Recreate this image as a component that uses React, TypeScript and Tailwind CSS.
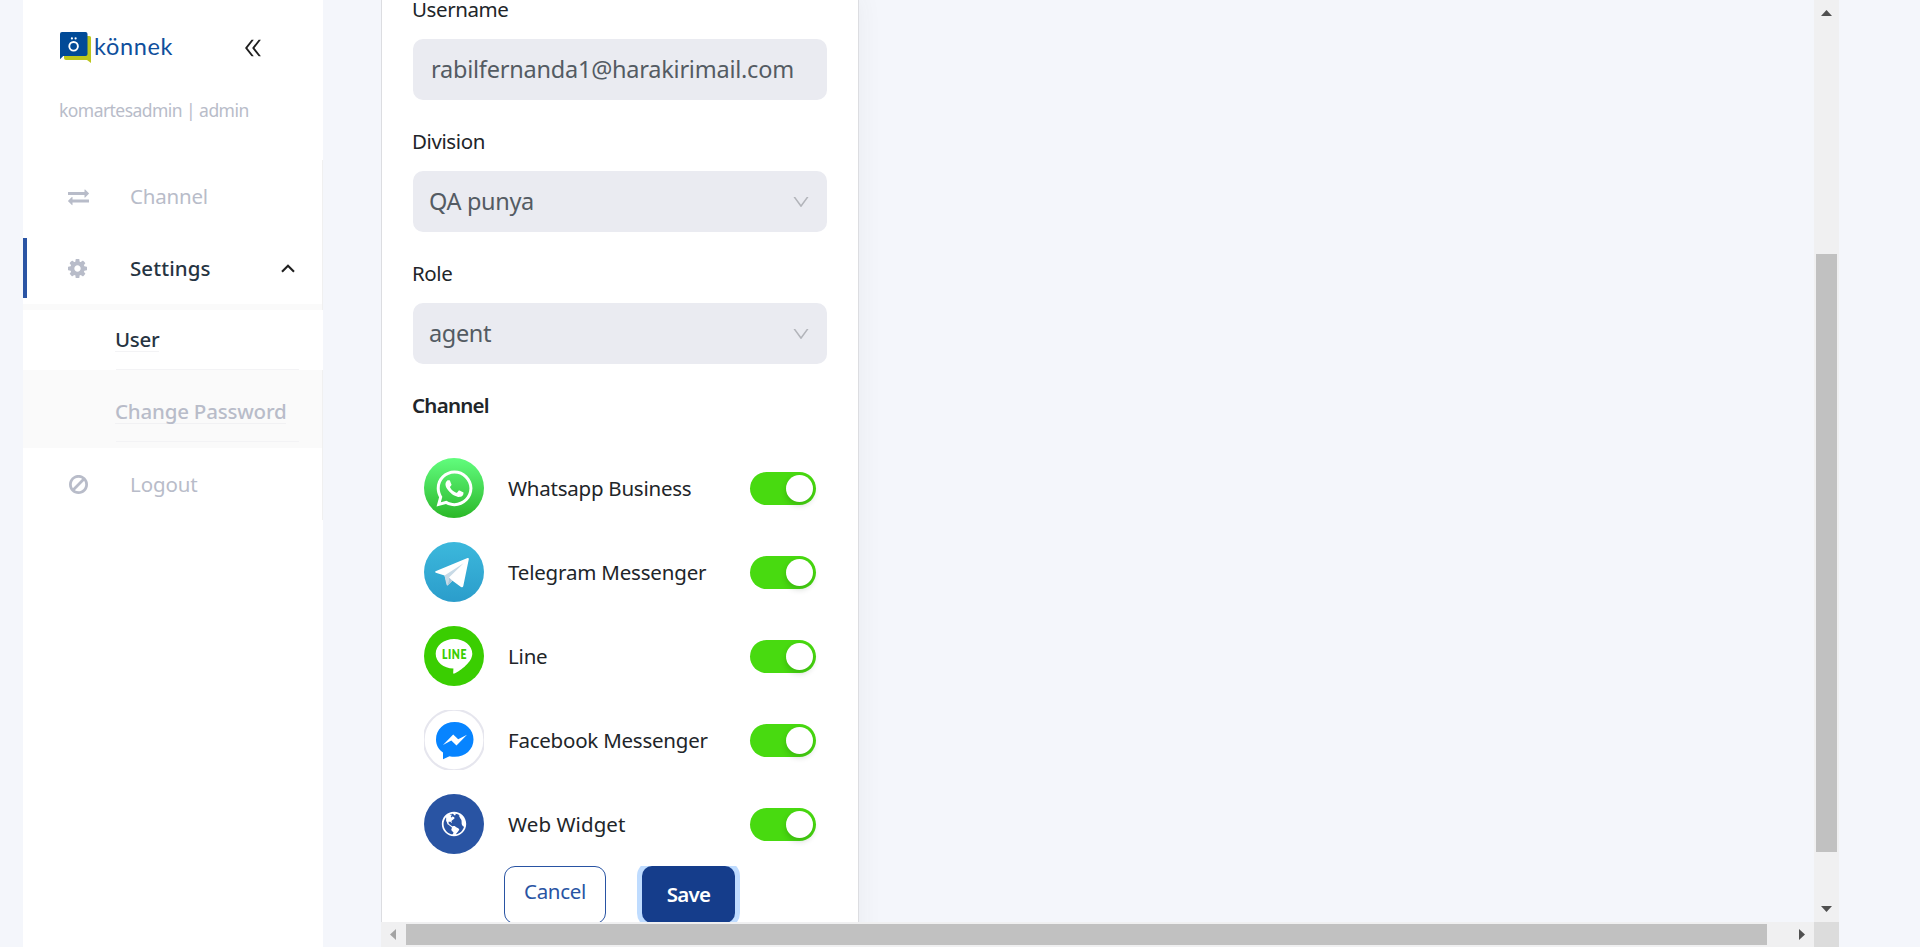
import React from "react";
import { AiOutlineDoubleLeft, AiOutlineDown } from "react-icons/ai";
import { FaWhatsapp } from "react-icons/fa";
import { IoMdGlobe } from "react-icons/io";

function Logo() {
  return (
    <div className="flex h-[32px] w-[114px] items-start">
      <svg width="32" height="32" viewBox="0 0 32 32" className="shrink-0">
        <path d="M5 4h24.500q1.500 0 1.500 1.500V31l-4-3H6q-2 0-2-2V5q0-1 1-1z" fill="#bcc61c" />
        <path d="M2 0h23.500q2 0 2 2v20q0 2-2 2H3.200L0 27.200V2q0-2 2-2z" fill="#014a97" />
        <circle cx="13.600" cy="14.300" r="4.300" fill="none" stroke="#fff" strokeWidth="1.900" />
        <circle cx="11.900" cy="6.400" r="1.100" fill="#fff" />
        <circle cx="15.600" cy="6.400" r="1.100" fill="#fff" />
      </svg>
      <span className="ml-[2px] font-['Lato'] text-[23.500px] leading-[29px] tracking-[0.650px] text-[#0f4f9d]">könnek</span>
    </div>
  );
}

function ExchangeIcon() {
  return (
    <svg width="21" height="21" viewBox="0 0 1792 1792" fill="currentColor">
      <path d="M1792 1184v192q0 13-9.500 22.500t-22.500 9.500h-1376v192q0 13-9.500 22.500t-22.500 9.500q-12 0-24-10l-319-320q-9-9-9-22 0-14 9-23l320-320q9-9 23-9 13 0 22.500 9.500t9.500 22.500v192h1376q13 0 22.500 9.500t9.500 22.500zm0-544q0 14-9 23l-320 320q-9 9-23 9-13 0-22.500-9.500t-9.500-22.500v-192h-1376q-13 0-22.500-9.500t-9.500-22.500v-192q0-13 9.500-22.500t22.500-9.500h1376v-192q0-14 9-23t23-9q12 0 24 10l319 319q9 9 9 23z" />
    </svg>
  );
}

function CogIcon() {
  return (
    <svg width="19" height="19" viewBox="0 128 1536 1536" fill="currentColor">
      <path d="M1024 896q0-106-75-181t-181-75-181 75-75 181 75 181 181 75 181-75 75-181zm512-109v222q0 12-8 23t-20 13l-185 28q-19 54-39 91 35 50 107 138 10 12 10 25t-9 23q-27 37-99 108t-94 71q-12 0-26-9l-138-108q-44 23-91 38-16 136-29 186-7 28-36 28h-222q-14 0-24.500-8.500t-11.500-21.500l-28-184q-49-16-90-37l-141 107q-10 9-25 9-14 0-25-11-126-114-165-168-7-10-7-23 0-12 8-23 15-21 51-66.500t54-70.500q-27-50-41-99l-183-27q-13-2-21-12.500t-8-23.500v-222q0-12 8-23t19-13l186-28q14-46 39-92-40-57-107-138-10-12-10-24 0-10 9-23 26-36 98.500-107.500t94.500-71.500q13 0 26 10l138 107q44-23 91-38 16-136 29-186 7-28 36-28h222q14 0 24.500 8.500t11.500 21.500l28 184q49 16 90 37l142-107q9-9 24-9 13 0 25 10 129 119 165 170 7 8 7 22 0 12-8 23-15 21-51 66.500t-54 70.500q26 50 41 98l183 28q13 2 21 12.500t8 23.500z" />
    </svg>
  );
}

function BanIcon() {
  return (
    <svg width="19" height="19" viewBox="0 0 1536 1536" fill="currentColor">
      <path d="M1312 765q0-161-87-295l-754 753q137 89 297 89 111 0 211.500-43.500t173.500-116.500 116-174.500 43-212.500zm-999 299l755-754q-135-91-300-91-148 0-273 73t-198 199-73 274q0 162 89 299zm1223-299q0 157-61 300t-163.500 246-245 164-298.500 61-298.500-61-245-164-163.500-246-61-300 61-299.500 163.500-245.500 245-164 298.500-61 298.500 61 245 164 163.500 245.500 61 299.500z" />
    </svg>
  );
}

function Sidebar() {
  return (
    <aside className="flex w-[300px] shrink-0 flex-col bg-white text-[20.500px] text-[#b8bcc9]">
      <div className="flex h-[98px] items-start pl-[37px] pt-[32px]">
        <Logo />
        <AiOutlineDoubleLeft className="ml-[67px] mt-[4px] h-6 w-6 text-[#1f1f1f]" />
      </div>
      <div className="h-[62px] pl-[36px] text-[17.500px] leading-[24px] tracking-[-0.550px]">komartesadmin | admin</div>

      <div className="flex h-[72px] items-center border-r border-[#f0f0f0] pl-[45px]">
        <ExchangeIcon />
        <span className="ml-[41px] tracking-[-0.200px]">Channel</span>
      </div>
      <div className="flex h-[72px] items-center border-r border-[#f0f0f0]">
        <span className="h-[60px] w-1 bg-[#2a54a4]" />
        <span className="ml-[41px]"><CogIcon /></span>
        <span className="ml-[43px] w-[151px] font-medium tracking-[0.100px] text-[#263442]">Settings</span>
        <svg width="14" height="9" viewBox="0 0 14 9" fill="none" stroke="#1f1f1f" strokeWidth="2.100">
          <path d="M1 7.800L7 1.800L13 7.800" />
        </svg>
      </div>
      <div className="flex h-[144px] flex-col bg-[#fafafa] font-medium">
        <div className="h-[6px] shrink-0 border-r border-[#f0f0f0]" />
        <div className="h-[60px] shrink-0 bg-white pl-[93px] pr-6">
          <div className="flex h-[60px] items-center border-b border-[#f3f3f5]">
            <span className="ml-[-1px] border-b border-[#f3f3f5] leading-[23px] tracking-[-0.300px] text-[#263442]">User</span>
          </div>
        </div>
        <div className="h-[78px] border-r border-[#f0f0f0] pl-[93px] pr-[23px] pt-3">
          <div className="flex h-[60px] items-center border-b border-[#f3f3f5]">
            <span className="ml-[-1px] whitespace-nowrap border-b border-[#f1f1f3] leading-[23px] tracking-[-0.200px]">Change Password</span>
          </div>
        </div>
      </div>
      <div className="flex h-[72px] items-center border-r border-[#f0f0f0] pl-[46px]">
        <BanIcon />
        <span className="ml-[42px] tracking-[-0.100px]">Logout</span>
      </div>
    </aside>
  );
}

function Field({ label, value, select }: { label: string; value: string; select?: boolean }) {
  return (
    <div className="mb-[27px]">
      <div className="mb-4 ml-[-1px] h-[28px] text-[20.500px] leading-[28px] tracking-[-0.400px]">{label}</div>
      {select ? (
        <div className="flex h-[61px] items-center justify-between rounded-[10px] bg-[#eaebf1] pl-4 pr-4 pt-px text-[23.500px] tracking-[-0.350px] text-[#545b63]">
          <span>{value}</span>
          <AiOutlineDown className="h-5 w-5 text-[#b2b4ba]" />
        </div>
      ) : (
        <div className="flex h-[61px] items-center rounded-[10px] bg-[#eaebf1] pl-[18px] text-[23.500px] tracking-[-0.230px] text-[#545b63]">
          {value}
        </div>
      )}
    </div>
  );
}

function TelegramIcon() {
  return (
    <svg width="60" height="60" viewBox="0 0 60 60">
      <path d="M11.500 29.300L43.500 16Q45 15.600 44.800 17.300L39.300 44Q38.800 46 37 45L28.500 38.700L23.500 43.500L20.500 33.600L11.800 30.800Q10.500 30 11.500 29.300z" fill="#fff" />
      <path d="M20.500 33.500L39.600 21.300L25 35.500L23.600 43.600Q22.700 43.500 22.300 42z" fill="#c8dae6" />
      <path d="M25 35.500L28.500 38.700L23.600 43.700z" fill="#a9c7da" />
    </svg>
  );
}

function LineIcon() {
  return (
    <svg width="60" height="60" viewBox="0 0 60 60">
      <path d="M30 13C40.200 13 48.300 19.500 48.300 27.700C48.300 36 36.500 44.500 31 47.300C29.500 48 29 47.700 29.200 46.200L29.400 42.500C19.500 42.300 11.700 35.900 11.700 27.700C11.700 19.500 19.900 13 30 13z" fill="#fff" />
      <text x="18" y="32.600" textLength="25" lengthAdjust="spacingAndGlyphs" fontFamily="Lato" fontSize="12.500" fontWeight="800" letterSpacing="0.700" fill="#3ace01">LINE</text>
    </svg>
  );
}

function MessengerIcon() {
  return (
    <svg width="60" height="60" viewBox="0 0 60 60">
      <circle cx="30" cy="30" r="30.300" fill="#fff" stroke="#e6e6ee" strokeWidth="2" />
      <path d="M30.700 12C41.300 12 49.500 19.300 49.500 29.500C49.500 39.500 41.300 46.800 30.700 46.800C29 46.800 27 46.600 25.500 46.200L19 49.200V42.500C14.500 39.500 12 35 12 29.500C12 19.300 20 12 30.700 12z" fill="#0784ff" />
      <path d="M19 35L29.200 24.400L34.200 29.300L43 24.800L32.500 35.400L27.300 30.500z" fill="#fff" />
    </svg>
  );
}

const channels: { name: string; tile: string; text: string; icon: React.ReactNode }[] = [
  { name: "Whatsapp Business", tile: "rounded-full bg-linear-to-b from-[#61fd7d] to-[#2bb826]", text: "tracking-[-0.240px]", icon: <FaWhatsapp className="h-[41px] w-[41px] text-white" /> },
  { name: "Telegram Messenger", tile: "rounded-full bg-linear-to-b from-[#3cb8dc] to-[#2b9dcb]", text: "tracking-[-0.190px]", icon: <TelegramIcon /> },
  { name: "Line", tile: "rounded-full bg-[#3ace01]", text: "tracking-[-0.200px]", icon: <LineIcon /> },
  { name: "Facebook Messenger", tile: "bg-white", text: "tracking-[-0.230px]", icon: <MessengerIcon /> },
  { name: "Web Widget", tile: "rounded-full bg-[#2954a3]", text: "tracking-[0.080px]", icon: <IoMdGlobe className="mr-px h-[30px] w-[30px] text-white" /> },
];

function UserForm() {
  return (
    <div className="mt-[-5px] h-[1000px] w-[478px] shrink-0 border-x border-[#dcdde1] bg-white pl-[31px] text-[20.500px] text-[#212529] shadow-[0_0_24px_rgba(60,60,70,0.060)]">
      <div className="w-[414px]">
        <Field label="Username" value="rabilfernanda1@harakirimail.com" />
        <Field label="Division" value="QA punya" select />
        <Field label="Role" value="agent" select />
        <div className="mb-[39px] ml-[-1px] h-[28px] font-semibold leading-[28px] tracking-[-0.750px]">Channel</div>
        <div className="flex flex-col gap-6 pl-[11px] pr-[11px]">
          {channels.map((c) => (
            <div key={c.name} className="flex h-[60px] items-center">
              <span className={`flex h-[60px] w-[60px] items-center justify-center overflow-hidden ${c.tile}`}>{c.icon}</span>
              <span className={`ml-6 grow whitespace-nowrap ${c.text}`}>{c.name}</span>
              <span className="mt-px flex h-[33px] w-[66px] items-center justify-end rounded-full bg-[#48da10] pr-[3px]">
                <span className="h-[27px] w-[27px] rounded-full bg-white shadow-[0_3px_6px_rgba(0,35,11,0.200)]" />
              </span>
            </div>
          ))}
        </div>
        <div className="mt-3 flex pl-[91px]">
          <div className="flex h-[58px] w-[102px] justify-center rounded-[11px] border border-[#2954a3] pt-[10px] leading-[28px] tracking-[-0.300px] text-[#2954a3]">Cancel</div>
          <div className="ml-[31px] h-[58px] overflow-hidden px-[5px]">
            <div className="flex h-[57px] w-[93px] items-center justify-center rounded-[10px] bg-[#153d8b] font-semibold tracking-[-0.700px] text-white shadow-[0_0_0_5px_#bfdcff]">Save</div>
          </div>
        </div>
      </div>
    </div>
  );
}

function Arrow({ d, dim }: { d: string; dim?: boolean }) {
  return (
    <svg width="25" height="25" viewBox="0 0 25 25" className="shrink-0" fill={dim ? "#a3a3a3" : "#505050"}>
      <path d={d} />
    </svg>
  );
}

export default function App() {
  return (
    <div className="flex h-[947px] w-[1920px] overflow-hidden bg-[#f4f6fb] pl-[23px] font-['Noto_Sans',sans-serif]">
      <Sidebar />
      <main className="ml-[58px] flex w-[1458px] flex-col">
        <div className="flex h-[922px]">
          <div className="flex w-[1433px] items-start overflow-hidden">
            <UserForm />
          </div>
          <div className="flex w-[25px] flex-col items-center bg-[#f0f0f1]">
            <Arrow d="M7 16L12.500 10L18 16z" />
            <div className="mt-[229px] h-[598px] w-[21px] bg-[#c1c1c1]" />
            <div className="grow" />
            <Arrow d="M7 9L12.500 15L18 9z" />
          </div>
        </div>
        <div className="flex h-[25px] items-center bg-[#f0f0f1]">
          <Arrow d="M15 7L9 12.500L15 18z" dim />
          <div className="h-[21px] w-[1361px] bg-[#c1c1c1]" />
          <div className="grow" />
          <Arrow d="M10 7L16 12.500L10 18z" />
          <div className="h-[25px] w-[25px] bg-[#dcdcdc]" />
        </div>
      </main>
    </div>
  );
}
